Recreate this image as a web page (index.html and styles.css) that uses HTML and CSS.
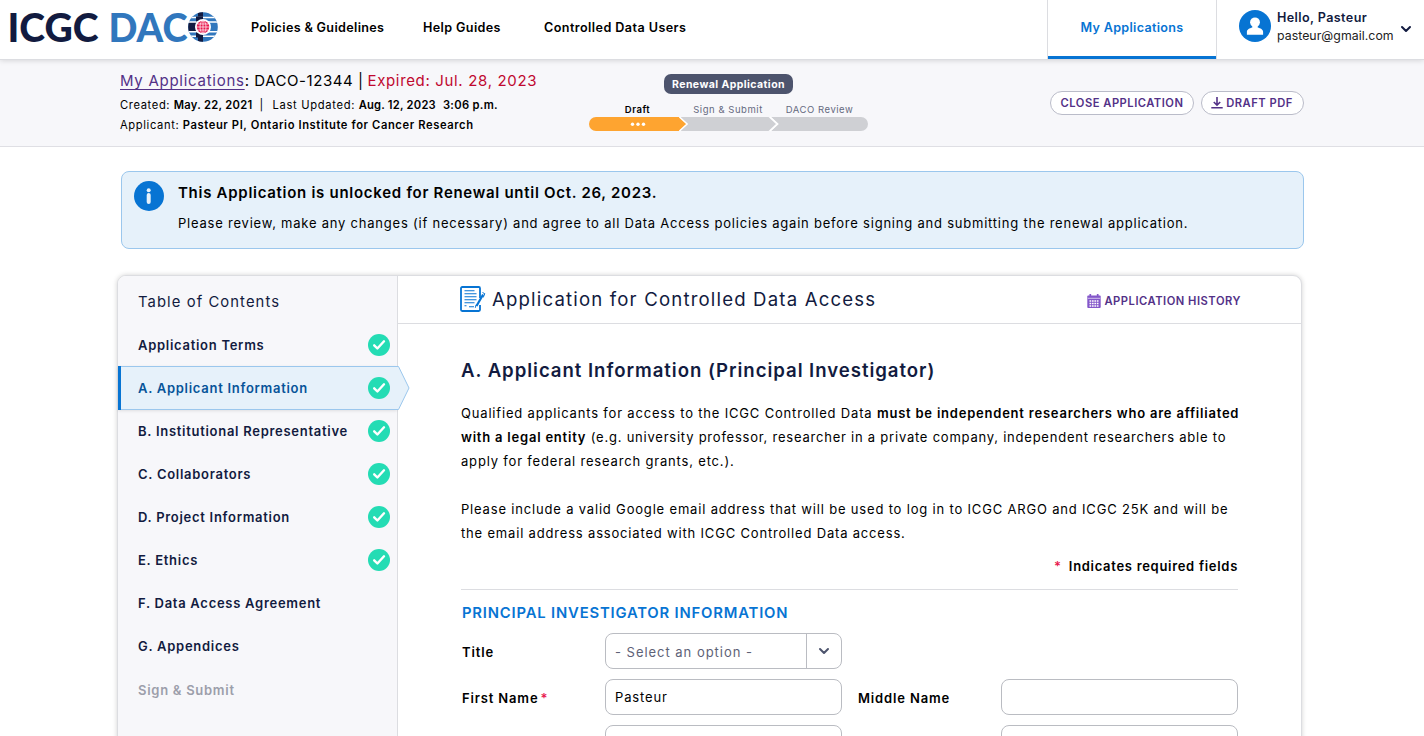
FILE: index.html
```
<!DOCTYPE html>
<html lang="en">
<head>
<meta charset="utf-8">
<title>ICGC DACO - Applicant Information</title>
<link rel="stylesheet" href="styles.css">
</head>
<body>
<svg width="0" height="0" class="defs">
  <symbol id="check" viewBox="0 0 22 22"><circle cx="11" cy="11" r="11" fill="#24dcb4"/><path d="M6.2 11.3l3.2 3.2 6.6-7.2" fill="none" stroke="#fff" stroke-width="2.4" stroke-linecap="round" stroke-linejoin="round"/></symbol>
  <symbol id="chevron" viewBox="0 0 12 8"><path d="M2 2l4 4 4-4" fill="none" stroke="currentColor" stroke-width="2" stroke-linecap="round" stroke-linejoin="round"/></symbol>
</svg>

<header class="topbar">
  <svg class="logo" width="212" height="36" viewBox="0 0 212 36">
    <text class="logo-text" x="-1.5" y="32.500" fill="#121b40" textLength="91" lengthAdjust="spacingAndGlyphs">ICGC</text>
    <text class="logo-text" x="99.500" y="32.500" fill="#3177bd" textLength="79" lengthAdjust="spacingAndGlyphs">DAC</text>
    <circle cx="194" cy="18" r="15.300" fill="#fff"/>
    <clipPath id="disc"><circle cx="194" cy="18" r="14.800"/></clipPath>
    <g clip-path="url(#disc)">
      <path d="M179 3h30v30h-30z" fill="#3177bd"/>
      <path d="M189 3h5v30h-5zM179 13h15v10h-15z" fill="#121b40"/>
      <path d="M179 8.500h30M179 13h30M179 22.700h30M179 27.200h30" stroke="#fff" stroke-width="1.500"/>
      <path d="M187 7.500h7v5h-7zM187 23.500h7v5h-7z" fill="#121b40"/>
    </g>
    <circle cx="194" cy="18" r="8" fill="#fff"/>
    <circle cx="194" cy="18" r="6.200" fill="#e8194f"/>
    <g fill="none" stroke="#fff" stroke-width=".7"><ellipse cx="194" cy="18" rx="3" ry="6.200"/><path d="M194 11.800v12.400M187.800 18h12.400M188.700 15h10.600M188.700 21h10.600"/></g>
  </svg>
  <nav class="nav">
    <a class="nav-policies">Policies &amp; Guidelines</a>
    <a class="nav-help">Help Guides</a>
    <a class="nav-users">Controlled Data Users</a>
  </nav>
  <a class="tab">My Applications</a>
  <div class="user">
    <svg width="32" height="32" viewBox="0 0 32 32"><circle cx="16" cy="16" r="16" fill="#0774d3"/><circle cx="16" cy="12.3" r="4.9" fill="#fff"/><path d="M13.3 15h5.4v2.4c2.8.7 5.4 2 5.4 4.4V24.7H7.9v-2.9c0-2.4 2.600-3.700 5.400-4.400z" fill="#fff"/></svg>
    <div class="user-text"><b>Hello, Pasteur</b><span>pasteur@gmail.com</span></div>
    <svg class="user-chevron" width="12" height="8"><use href="#chevron"/></svg>
  </div>
</header>

<section class="subhead">
  <div class="summary">
    <div class="crumb"><a>My Applications</a><span class="app-id">: DACO-12344 |</span> <span class="expired">Expired: Jul. 28, 2023</span></div>
    <div class="meta"><span class="loose">Created:</span> <b>May. 22, 2021</b><i>|</i><span class="loose">Last Updated:</span> <b class="updated">Aug. 12, 2023</b><b class="time">3:06 p.m.</b></div>
    <div class="meta"><span class="loose">Applicant:</span> <b class="applicant">Pasteur PI, Ontario Institute for Cancer Research</b></div>
  </div>
  <div class="progress">
    <span class="badge">Renewal Application</span>
    <div class="steps"><b>Draft</b><span>Sign &amp; Submit</span><span>DACO Review</span></div>
    <svg width="279" height="14" viewBox="0 0 279 14">
      <path d="M91 0h88.500l7.500 7-7.500 7H91l7.500-7zM182 0h90a7 7 0 0 1 0 14h-90l7.500-7z" fill="#cfd0d4"/>
      <path d="M7 0h83l8 7-8 7H7A7 7 0 0 1 7 0z" fill="#fea430"/>
      <path d="M90.500 0l7.600 7-7.600 7M181 0l7.600 7-7.600 7" fill="none" stroke="#fff" stroke-width="1.500"/>
      <g fill="#fff"><circle cx="43.500" cy="7.300" r="1.700"/><circle cx="49" cy="7.300" r="1.700"/><circle cx="54.500" cy="7.300" r="1.700"/></g>
    </svg>
  </div>
  <div class="actions">
    <button class="close">CLOSE APPLICATION</button>
    <button class="pdf"><svg width="12" height="12" viewBox="0 0 12 12" fill="none" stroke="#533187" stroke-width="1.600"><path d="M6 0v8M2.800 5L6 8.200 9.200 5M.3 10.800h11.400"/></svg>DRAFT PDF</button>
  </div>
</section>

<main>
  <section class="notice">
    <svg width="30" height="30" viewBox="0 0 30 30"><circle cx="15" cy="15" r="15" fill="#0774d3"/><circle cx="14.700" cy="9.200" r="2" fill="#e6f1fa"/><path d="M14.700 14v7" stroke="#e6f1fa" stroke-width="4" stroke-linecap="round"/></svg>
    <div>
      <h2>This Application is unlocked for Renewal until Oct. 26, 2023.</h2>
      <p>Please review, make any changes (if necessary) and agree to all Data Access policies again before signing and submitting the renewal application.</p>
    </div>
  </section>

  <section class="card">
    <aside class="toc">
      <h3>Table of Contents</h3>
      <a>Application Terms<svg><use href="#check"/></svg></a>
      <a class="active">A. Applicant Information<svg><use href="#check"/></svg>
        <svg class="arrow" viewBox="0 0 13 44"><path d="M0 .5h1.500L12 22 1.500 43.500H0z" fill="#e6f1fa"/><path d="M0 .5h1.500L12 22 1.500 43.500H0" fill="none" stroke="#9bc7ed"/></svg></a>
      <a>B. Institutional Representative<svg><use href="#check"/></svg></a>
      <a>C. Collaborators<svg><use href="#check"/></svg></a>
      <a>D. Project Information<svg><use href="#check"/></svg></a>
      <a>E. Ethics<svg><use href="#check"/></svg></a>
      <a>F. Data Access Agreement</a>
      <a>G. Appendices</a>
      <a class="disabled">Sign &amp; Submit</a>
    </aside>
    <div class="panel">
      <header class="panel-head">
        <svg width="26" height="26" viewBox="0 0 26 26" fill="none" stroke="#0774d3">
          <path d="M20 12V2.200A1.200 1.200 0 0 0 18.800 1H2.200A1.200 1.200 0 0 0 1 2.200v21.600A1.200 1.200 0 0 0 2.200 25h16.600a1.200 1.200 0 0 0 1.200-1.200V19" stroke-width="1.800"/>
          <path d="M4.500 4.700h10M4.500 7.700h12M4.500 10.700h12M4.500 13.700h12M4.500 16.700h10M4.500 19.700h2M9 20.700h5" stroke-width="1.100"/>
          <path d="M16.500 20l6.600-11.500" stroke-width="2.200"/><path d="M15.300 21.800l.8-3M22.500 6.500l2.300 1.200-1.600 3.800" stroke-width="1"/>
        </svg>
        <h1>Application for Controlled Data Access</h1>
        <a class="history"><svg width="14" height="14" viewBox="0 0 14 14"><path d="M1.200 1.500h11.600q.9 0 .9.900V13q0 .9-.9.900H1.200q-.9 0-.9-.9V2.400q0-.9.900-.9z" fill="#8457ca"/><path d="M3.300 0v3M10.700 0v3" stroke="#8457ca" stroke-width="1.700"/><path d="M.8 4.300h12.400" stroke="#e6dcf5" stroke-width=".8"/><path d="M2.500 7h9M2.500 9.500h9M2.500 12h9" stroke="#fff" stroke-width="1.500" stroke-dasharray="1.700 .75"/></svg>APPLICATION HISTORY</a>
      </header>
      <div class="content">
        <h2>A. Applicant Information (Principal Investigator)</h2>
        <p>Qualified applicants for access to the ICGC Controlled Data <b>must be independent researchers who are affiliated<br>with a legal entity</b> <span class="example">(e.g. university professor, researcher in a private company, independent researchers able to</span><br>apply for federal research grants, etc.).</p>
        <p>Please include a valid Google email address that will be used to log in to ICGC ARGO and ICGC 25K and will be<br>the email address associated with ICGC Controlled Data access.</p>
        <div class="required"><span class="star">*</span>Indicates required fields</div>
        <h4>PRINCIPAL INVESTIGATOR INFORMATION</h4>
        <div class="form">
          <label>Title</label>
          <div class="field select"><span>- Select an option -</span><i><svg width="12" height="8"><use href="#chevron"/></svg></i></div>
          <label class="first">First Name<span class="star">*</span></label>
          <div class="field">Pasteur</div>
          <label class="second">Middle Name</label>
          <div class="field"></div>
          <label class="first"></label>
          <div class="field"></div>
          <label class="second"></label>
          <div class="field"></div>
        </div>
      </div>
    </div>
  </section>
</main>
</body>
</html>
```
FILE: styles.css
```
* { box-sizing: border-box; }
body { margin: 0; height: 736px; overflow: hidden; background: #fff; color: #000; font: 13px Inter, sans-serif; }
h1, h2, h3, h4, p { margin: 0; }
b { font-weight: 600; }
i { font-style: normal; }
svg { display: block; flex: none; overflow: visible; }
.defs { position: absolute; }

.topbar { position: relative; display: flex; height: 60px; background: #fff; border-bottom: 1px solid #dcdde1; box-shadow: 0 1px 5px rgba(0, 0, 0, .13); }
.logo { margin: 9px 0 0 9px; }
.logo-text { font: 900 39.5px Lato, sans-serif; }
.nav { display: flex; margin-left: 30px; flex: 1; font-size: 12.6px; font-weight: 600; line-height: 56px; white-space: nowrap; }
.nav-policies { width: 172px; letter-spacing: .33px; }
.nav-help { width: 121px; letter-spacing: .37px; }
.nav-users { letter-spacing: .43px; }
.tab { width: 170px; height: 59px; border: solid #dcdde1; border-width: 0 1px; box-shadow: inset 0 -3px #0774d3; color: #0774d3; text-align: center; font-size: 12.6px; font-weight: 600; letter-spacing: .29px; line-height: 56px; }
.user { display: flex; width: 207px; padding: 10px 0 0 22px; }
.user-text { margin: -2px 0 0 6px; width: 123px; color: #121b40; font-size: 12.6px; line-height: 19px; letter-spacing: .39px; }
.user-text b, .user-text span { display: block; }
.user-text span { color: #222; font-size: 12.3px; letter-spacing: .05px; line-height: 18px; }
.user-chevron { margin-top: 15px; color: #121b40; }

.subhead { display: flex; height: 87px; padding: 0 120px; background: #f7f7fa; border-bottom: 1px solid #dfdfe4; }
.summary { width: 469px; padding-top: 9px; white-space: nowrap; }
.crumb { display: flex; gap: 4px; height: 24px; font-size: 15px; line-height: 23px; }
.crumb a { color: #533187; letter-spacing: .73px; text-decoration: underline; text-underline-offset: 3px; text-decoration-thickness: 1px; }
.app-id { margin-left: -4px; letter-spacing: .55px; }
.expired { color: #c0082f; letter-spacing: .66px; }
.meta { margin-top: 2px; height: 18px; font-size: 11.2px; line-height: 20px; letter-spacing: .29px; }
.meta .loose { letter-spacing: .62px; }
.meta i { margin: 0 9px 0 7px; }
.meta .loose ~ .loose { letter-spacing: .69px; }
.meta .updated { letter-spacing: .22px; }
.meta .time { margin-left: 7px; letter-spacing: .3px; }
.meta .applicant { letter-spacing: .6px; }
.progress { display: flex; flex-direction: column; width: 279px; padding-top: 14px; align-items: center; }
.badge { height: 20px; padding: 0 8px; border-radius: 7px; background: #4d546d; color: #fff; font-size: 10.5px; font-weight: 700; line-height: 21px; letter-spacing: .43px; }
.steps { display: flex; width: 279px; height: 14px; margin: 9px 0 0; color: #656a80; font-size: 9.5px; line-height: 14px; letter-spacing: .54px; text-align: center; }
.steps b { width: 97px; color: #000; }
.steps span { width: 84px; }
.steps span + span { margin-left: 8px; width: 82px; padding-left: 1px; }
.actions { display: flex; flex: 1; justify-content: flex-end; gap: 7px; padding-top: 31px; }
.actions button { display: flex; height: 24px; padding: 0; align-items: center; justify-content: center; border: 1px solid #babcc9; border-radius: 12px; background: #fff; color: #533187; font: 600 11.2px Inter, sans-serif; letter-spacing: .5px; }
.actions .close { width: 144px; }
.actions .pdf { width: 103px; gap: 3px; padding-right: 1px; }

main { padding: 24px 121px 0; }
.notice { display: flex; width: 1183px; height: 78px; padding: 9px 12px; border: 1px solid #9bc7ed; border-radius: 8px; background: #e6f1fa; white-space: nowrap; }
.notice div { margin-left: 14px; }
.notice h2 { font-size: 15px; font-weight: 600; line-height: 24px; letter-spacing: .715px; }
.notice p { margin-top: 6px; line-height: 24px; letter-spacing: .777px; }

.card { display: flex; width: 1185px; height: 481px; margin: 26px 0 0 -4px; border: 1px solid #dcdde1; border-radius: 9px; box-shadow: 0 0 5px rgba(0, 0, 0, .18); background: #fff; }
.toc { width: 280px; border-right: 1px solid #dcdde1; border-radius: 8px 0 0; background: #f7f7fa; color: #121b40; }
.toc h3 { height: 47px; padding-left: 20px; font-size: 14.8px; font-weight: 400; line-height: 52px; letter-spacing: 1.08px; }
.toc a { position: relative; display: flex; height: 43px; padding: 0 7px 0 20px; align-items: center; justify-content: space-between; font-weight: 600; letter-spacing: .72px; }
.toc a svg { width: 22px; height: 22px; }
.toc .active { height: 44px; margin: 0 0 -1px; padding-left: 17px; border: solid #9bc7ed; border-width: 1px 0; box-shadow: 0 1px 3px rgba(0, 0, 0, .1); background: #e6f1fa; color: #075499; }
.toc .active::before { content: ""; width: 3px; height: 44px; margin: 0 17px 0 -17px; background: #0774d3; }
.toc .active > svg:not(.arrow) { margin-left: auto; }
.toc .active .arrow { position: absolute; left: 279px; top: -1px; width: 13px; height: 44px; }
.toc .disabled { margin-top: 1px; color: #9c9eaa; }
.panel { flex: 1; min-width: 0; }
.panel-head { display: flex; height: 48px; padding: 10px 60px 0 62px; border-bottom: 1px solid #dcdde1; color: #121b40; }
.panel-head h1 { margin: -1px 0 0 6px; font-size: 18.6px; font-weight: 400; line-height: 28px; letter-spacing: 1.166px; white-space: nowrap; }
.history { display: flex; gap: 3px; height: 30px; margin-left: auto; align-items: center; color: #533187; font-size: 11.2px; font-weight: 600; letter-spacing: .51px; }
.content { padding: 31px 63px 0 63px; }
.content h2 { margin-bottom: 15px; color: #121b40; font-size: 18.6px; font-weight: 600; line-height: 31px; letter-spacing: .958px; }
.content p { margin-bottom: 24px; line-height: 24px; letter-spacing: .82px; white-space: nowrap; }
.content p b { letter-spacing: .78px; }
.content .example { letter-spacing: .77px; }
.star { color: #e8194f; }
.required { display: flex; height: 45px; margin-top: -24px; padding-top: 9px; justify-content: flex-end; border-bottom: 1px solid #dcdde1; font-weight: 600; line-height: 24px; letter-spacing: .7px; }
.required .star { margin-right: 7px; }
.content h4 { height: 43px; padding-left: 1px; color: #0774d3; font-size: 14.8px; font-weight: 600; line-height: 46px; letter-spacing: .83px; }
.form { display: grid; grid-template-columns: 144px 237px 16px 143px 237px; grid-auto-rows: 36px; row-gap: 10px; align-items: center; }
.form label { font-weight: 600; letter-spacing: .85px; padding: 2px 0 0 1px; grid-column: 1; }
.form label.second { grid-column: 4; padding-left: 0; }
.form .star { margin-left: 2px; }
.field { height: 36px; padding-left: 9px; border: 1px solid #babcc2; border-radius: 8px; line-height: 35px; letter-spacing: .87px; }
.select { display: flex; justify-content: space-between; color: #5e6277; letter-spacing: .97px; line-height: 37px; }
.select i { display: flex; width: 35px; border-left: 1px solid #babcc2; align-items: center; justify-content: center; color: #4d546d; }
```
